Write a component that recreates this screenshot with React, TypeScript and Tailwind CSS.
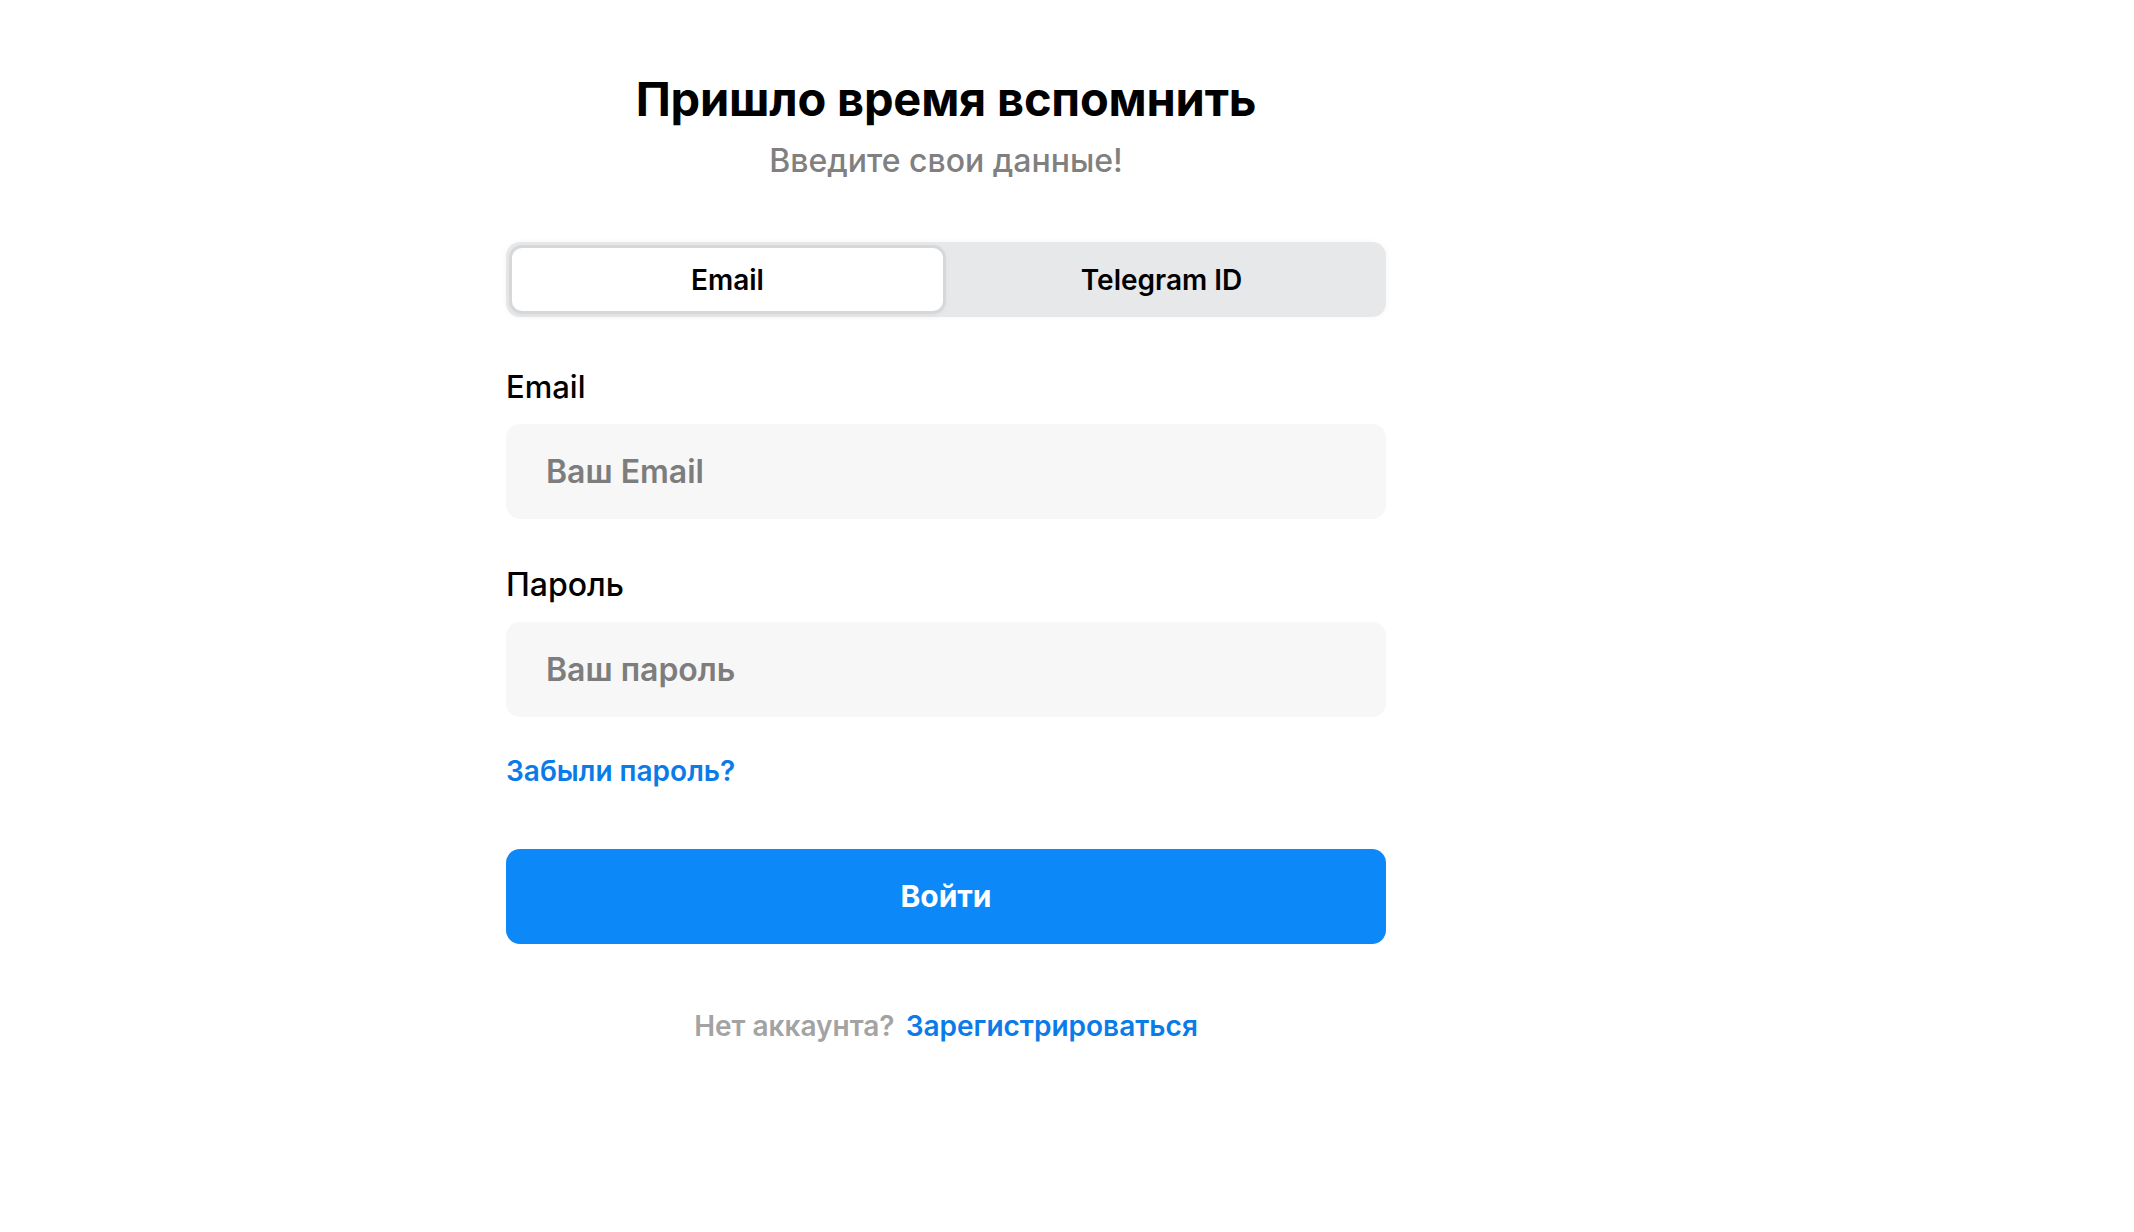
import { useState } from "react";

export default function App() {
  const [tab, setTab] = useState<"email" | "telegram">("email");

  return (
    <div className="min-h-screen bg-white text-black" style={{ fontFamily: "Inter, 'Noto Sans', sans-serif" }}>
      <main className="pl-[506px] pt-[67px]">
        <div className="w-[880px]">
          {/* Heading */}
          <div className="text-center">
            <h1 className="text-[47px] leading-[64px] font-bold tracking-[-0.2px]">Пришло время вспомнить</h1>
            <p className="mt-[10px] text-[32px] leading-[40px] font-medium text-[#808080]">Введите свои данные!</p>
          </div>

          {/* Tabs */}
          <div className="mt-[61px] h-[75px] rounded-[14px] bg-[#e7e8ea] p-[6px] flex shadow-[0_0_6px_rgba(0,0,0,0.04)]">
            <button
              onClick={() => setTab("email")}
              className={`w-[431px] rounded-[10px] text-[28px] font-semibold ${
                tab === "email" ? "bg-white shadow-[0_0_0_3px_#d6d7d9,0_2px_8px_rgba(0,0,0,0.08)]" : ""
              }`}
            >
              Email
            </button>
            <button
              onClick={() => setTab("telegram")}
              className={`flex-1 rounded-[10px] text-[28px] font-semibold ${
                tab === "telegram" ? "bg-white shadow-[0_0_0_3px_#d6d7d9,0_2px_8px_rgba(0,0,0,0.08)]" : ""
              }`}
            >
              Telegram ID
            </button>
          </div>

          {/* Email */}
          <label className="block mt-[50px] text-[31px] leading-[40px] font-medium">
            {tab === "email" ? "Email" : "Telegram ID"}
          </label>
          <input
            placeholder={tab === "email" ? "Ваш Email" : "Ваш Telegram ID"}
            className="mt-[17px] w-full h-[95px] rounded-[14px] bg-[#f7f7f7] px-[40px] text-[32px] font-semibold outline-none placeholder:text-[#7d7d7d]"
          />

          {/* Password */}
          <label className="block mt-[46px] text-[32px] leading-[40px] font-medium">Пароль</label>
          <input
            type="password"
            placeholder="Ваш пароль"
            className="mt-[17px] w-full h-[95px] rounded-[14px] bg-[#f7f7f7] px-[40px] text-[32px] font-semibold outline-none placeholder:text-[#7d7d7d]"
          />

          <a href="#" className="inline-block mt-[36px] text-[28px] leading-[36px] font-semibold text-[#0b7be8]">
            Забыли пароль?
          </a>

          <button className="mt-[60px] w-full h-[95px] rounded-[14px] bg-[#0d88f8] text-white text-[30px] font-bold">
            Войти
          </button>

          <p className="mt-[64px] text-center text-[28px] leading-[36px] font-semibold">
            <span className="text-[#a3a3a3]">Нет аккаунта?</span>{" "}
            <a href="#" className="ml-[4px] text-[#0b7be8]">Зарегистрироваться</a>
          </p>
        </div>
      </main>
    </div>
  );
}
